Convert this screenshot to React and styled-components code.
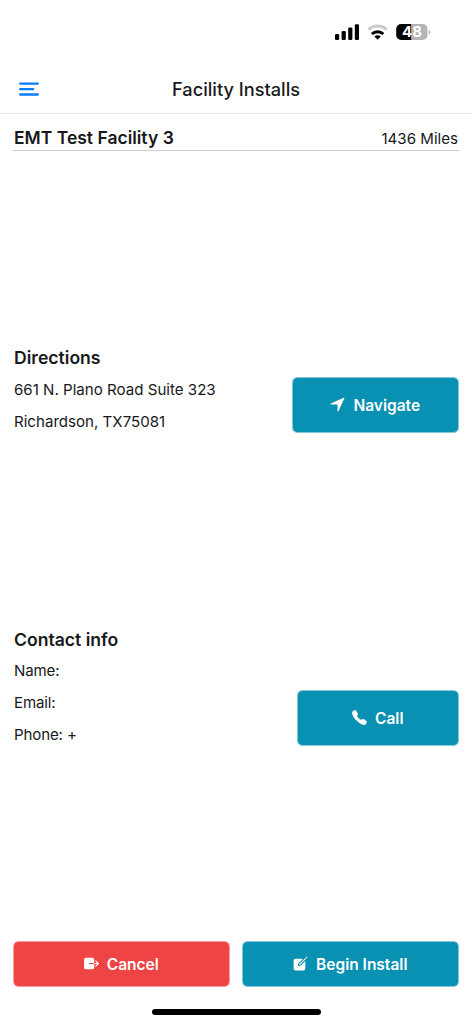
import React from "react";
import styled, { createGlobalStyle } from "styled-components";
import { IoNavigate, IoCall, IoExit, IoCreate } from "react-icons/io5";

const GlobalStyle = createGlobalStyle`
  * { box-sizing: border-box; }
  body {
    margin: 0;
    background: #fff;
    color: #18191b;
    font-family: Inter, "Liberation Sans", sans-serif;
  }
`;

const Screen = styled.div`
  display: flex;
  flex-direction: column;
  width: 472px;
  height: 1024px;
  overflow: hidden;
  background: #fff;
`;

const StatusBar = styled.div`
  display: flex;
  justify-content: flex-end;
  height: 65px;
  padding: 22px 40px 0 0;
`;

const Header = styled.header`
  display: grid;
  grid-template-columns: 60px 1fr 60px;
  align-items: center;
  height: 49px;
  border-bottom: 1px solid #ebebeb;
`;

const MenuButton = styled.button`
  display: flex;
  padding: 0 0 0 18px;
  border: 0;
  background: none;
`;

const Title = styled.h1`
  margin: 0;
  padding-top: 1px;
  text-align: center;
  font-size: 18.2px;
  font-weight: 500;
  line-height: 23px;
`;

const FacilityRow = styled.div`
  display: flex;
  justify-content: space-between;
  align-items: center;
  height: 37px;
  margin: 0 13px;
  padding: 12px 1px 0;
  border-bottom: 1px solid #cfcfcf;
  line-height: 24px;
`;

const FacilityName = styled.h2`
  margin: 0;
  font-size: 17.5px;
  font-weight: 600;
`;

const Distance = styled.span`
  padding-top: 2px;
  font-size: 15.1px;
`;

const Content = styled.main`
  display: flex;
  flex: 1;
  flex-direction: column;
  gap: 186px;
  padding: 191px 13px 0 14px;
`;

const SectionTitle = styled.h2`
  margin: 0;
  font-size: 17.6px;
  font-weight: 600;
  line-height: ${(p) => p.$lineHeight || 31}px;
`;

const SectionBody = styled.div`
  display: flex;
  justify-content: space-between;
  align-items: flex-end;
`;

const Line = styled.p`
  margin: 0;
  font-size: 15.1px;
  line-height: 32px;
  letter-spacing: ${(p) => p.$spacing || 0}px;
`;

const Button = styled.button`
  display: flex;
  align-items: center;
  justify-content: center;
  gap: 7px;
  width: ${(p) => p.$width || 217}px;
  height: ${(p) => p.$height || 46}px;
  margin: 0 0 ${(p) => p.$bottom || 0}px;
  padding: 0 1.5px 0 0;
  border: 1px solid ${(p) => (p.$danger ? "#f7a1a1" : "#83c8d8")};
  border-radius: 5px;
  background: ${(p) => (p.$danger ? "#ef4444" : "#0891b2")};
  background-clip: padding-box;
  color: #fff;
  font-family: inherit;
  font-size: 15.5px;
  font-weight: 600;
  line-height: 20px;

  svg { width: 17px; height: 17px; margin-bottom: 1px; }
`;

const Label = styled.span`
  padding-top: 1px;
`;

const Footer = styled.footer`
  display: flex;
  justify-content: space-between;
  height: 68px;
  padding: 0 13px;
`;

const HomeIndicator = styled.div`
  width: 169px;
  height: 6px;
  margin: 0 auto 9px;
  border-radius: 3px;
  background: #000;
`;

function StatusIcons() {
  return (
    <svg width="98" height="20" viewBox="334 22 98 20">
      <rect x="335" y="34" width="4.2" height="6" rx="1.2" />
      <rect x="341.6" y="31" width="4.2" height="9" rx="1.2" />
      <rect x="348.2" y="27.6" width="4.2" height="12.4" rx="1.2" />
      <rect x="354.8" y="24.2" width="4.2" height="15.8" rx="1.2" />
      <path d="M368.5 29.6a13.2 13.2 0 0 1 18.2 0" fill="none" stroke="#cacaca" strokeWidth="3" />
      <path d="M371.9 34a8.2 8.2 0 0 1 11.4 0" fill="none" stroke="#000" strokeWidth="3" />
      <path d="M374.4 36.6a4.8 4.8 0 0 1 6.4 0l-3.2 3.2z" />
      <path d="M411.5 24h-10.3a5 5 0 0 0-5 5v6a5 5 0 0 0 5 5h10.3z" />
      <path d="M411.5 24h11a5 5 0 0 1 5 5v6a5 5 0 0 1-5 5h-11z" fill="#b5b5b5" />
      <path d="M428.8 29.7q1.8.6 1.8 2.4t-1.8 2.4z" fill="#b5b5b5" />
      <text x="412" y="37.3" textAnchor="middle" fill="#fff" fontFamily="Inter, sans-serif" fontSize="15" fontWeight="700">48</text>
    </svg>
  );
}

function MenuIcon() {
  return (
    <svg width="22" height="16" viewBox="0 0 22 16" fill="none" stroke="#0a7cff" strokeWidth="2.3" strokeLinecap="round">
      <path d="M2.2 2.6h17.6M2.2 8.1h13M2.2 13.5h17.6" />
    </svg>
  );
}

export default function App() {
  return (
    <Screen>
      <GlobalStyle />
      <StatusBar>
        <StatusIcons />
      </StatusBar>
      <Header>
        <MenuButton aria-label="Menu">
          <MenuIcon />
        </MenuButton>
        <Title>Facility Installs</Title>
      </Header>
      <FacilityRow>
        <FacilityName>EMT Test Facility 3</FacilityName>
        <Distance>1436 Miles</Distance>
      </FacilityRow>
      <Content>
        <section>
          <SectionTitle $lineHeight={32}>Directions</SectionTitle>
          <SectionBody>
            <div>
              <Line>661 N. Plano Road Suite 323</Line>
              <Line>Richardson, TX75081</Line>
            </div>
            <Button $width={167} $height={56} $bottom={5}>
              <IoNavigate />
              <Label>Navigate</Label>
            </Button>
          </SectionBody>
        </section>
        <section>
          <SectionTitle>Contact info</SectionTitle>
          <SectionBody>
            <div>
              <Line $spacing={-0.15}>Name:</Line>
              <Line $spacing={-0.15}>Email:</Line>
              <Line $spacing={-0.15}>Phone: +</Line>
            </div>
            <Button $width={162} $height={56} $bottom={5}>
              <IoCall />
              <Label>Call</Label>
            </Button>
          </SectionBody>
        </section>
      </Content>
      <Footer>
        <Button $danger>
          <IoExit />
          <Label>Cancel</Label>
        </Button>
        <Button>
          <IoCreate />
          <Label>Begin Install</Label>
        </Button>
      </Footer>
      <HomeIndicator />
    </Screen>
  );
}
